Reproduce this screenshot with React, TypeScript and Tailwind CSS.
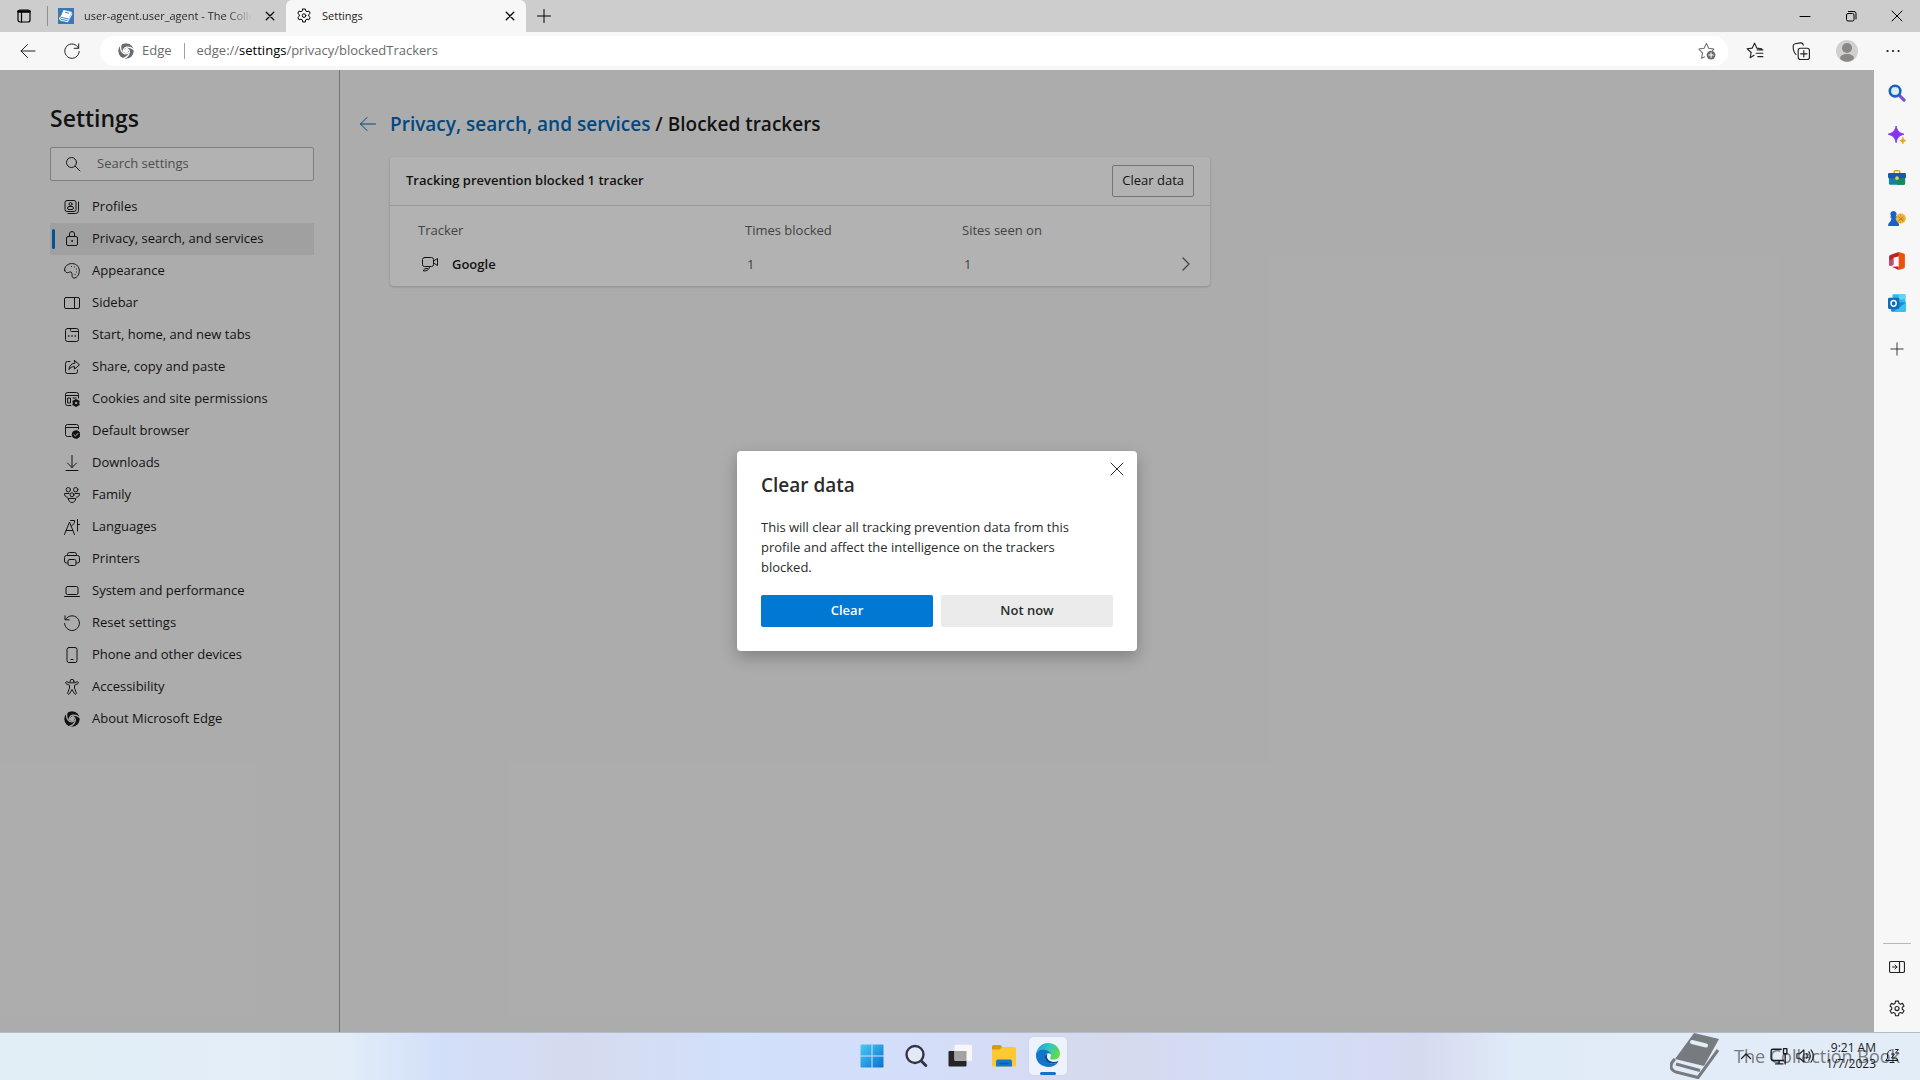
import type { ReactNode } from 'react';
import { clsx } from 'clsx';

type IconProps = {
  children: ReactNode;
  className?: string;
};

function Icon({ children, className = 'size-4' }: IconProps) {
  return (
    <svg
      viewBox="0 0 16 16"
      fill="none"
      stroke="currentColor"
      strokeLinecap="round"
      strokeLinejoin="round"
      className={clsx('shrink-0', className)}
      aria-hidden="true"
    >
      {children}
    </svg>
  );
}

const GearShape = () => (
  <>
    <path d="M6.7 1h2.6l.4 1.900 1.300.8 1.900-.7 1.300 2.300-1.500 1.300v1.600l1.500 1.300-1.300 2.300-1.900-.7-1.300.8-.4 2.100H6.700l-.4-2.100-1.300-.8-1.900.7-1.300-2.300 1.500-1.300V6.600L1.800 5.300 3.100 3l1.900.7 1.300-.8z" />
    <circle cx="8" cy="7.600" r="1.800" />
  </>
);

// Single-colour Edge mark: a disc cut by three curved blades
const SwirlShape = ({ id }: { id: string }) => (
  <>
    <mask id={id}>
      <circle cx="8" cy="8" r="8" fill="#fff" stroke="none" />
      <g stroke="#000" strokeWidth="1.300" fill="none">
        <path d="M5.400 9.200C4.800 6.800 6.200 4.700 8.600 4.200 11.500 3.700 14 4.800 16.500 7.200" />
        <path d="M5.400 9.200C4.800 6.800 6.200 4.700 8.600 4.200 11.500 3.700 14 4.800 16.500 7.200" transform="rotate(120 8 8)" />
        <path d="M5.400 9.200C4.800 6.800 6.200 4.700 8.600 4.200 11.500 3.700 14 4.800 16.500 7.200" transform="rotate(240 8 8)" />
      </g>
      <circle cx="8" cy="8" r="2.200" fill="#000" stroke="none" />
    </mask>
    <circle cx="8" cy="8" r="7.800" fill="currentColor" stroke="none" mask={`url(#${id})`} />
  </>
);

const navItems: { label: string; icon: ReactNode; active?: boolean }[] = [
  {
    label: 'Profiles',
    icon: (
      <>
        <rect x="1" y="1.500" width="11" height="11" rx="2" />
        <circle cx="6.500" cy="5" r="1.500" />
        <rect x="3.500" y="7.500" width="6" height="3" rx="1.500" />
        <path d="M14.500 3v8.500a3 3 0 0 1-3 3H4" />
      </>
    ),
  },
  {
    label: 'Privacy, search, and services',
    active: true,
    icon: (
      <>
        <rect x="2.500" y="5.500" width="11" height="9" rx="1.500" />
        <path d="M5.500 5.500V3a2.500 2.500 0 0 1 5 0v2.500" />
        <circle cx="8" cy="10" r="0.500" />
      </>
    ),
  },
  {
    label: 'Appearance',
    icon: (
      <>
        <path d="M.6 7C.4 4.500 2 2.500 4.500 1.300 8-.4 12.800.8 14.600 4.500c1.500 3.200.6 7.600-2.300 9.800-1.600 1.200-3.800 1.100-4.200-1-.2-1 .1-2.300-.2-3.200-.5-1.500-2-1.300-3.100-.7C3 10.200.8 9.300.6 7z" />
        <path d="M7.500 3.500h.1M10.500 4h.1M12.500 6h.1M12.500 9h.1M11 11.500h.1" />
      </>
    ),
  },
  {
    label: 'Sidebar',
    icon: (
      <>
        <rect x="0.500" y="2.500" width="15" height="11" rx="1.500" />
        <path d="M10.500 2.500v11" />
      </>
    ),
  },
  {
    label: 'Start, home, and new tabs',
    icon: (
      <>
        <rect x="1.500" y="1.500" width="13" height="13" rx="2" />
        <path d="M6.500 1.500v2a1 1 0 0 0 1 1h7" />
        <path d="M4.500 9h.4M7.800 9h.4M11.100 9h.4" strokeWidth="1.400" />
      </>
    ),
  },
  {
    label: 'Share, copy and paste',
    icon: (
      <>
        <path d="M6 2.500H3.500a2 2 0 0 0-2 2v8a2 2 0 0 0 2 2h8a2 2 0 0 0 2-2V11" />
        <path d="M10.500 1.500l5 4.300-5 4.300V7.600c-2.600 0-4.300.9-5.500 3 .1-3.500 2-6 5.500-6.400z" />
      </>
    ),
  },
  {
    label: 'Cookies and site permissions',
    icon: (
      <>
        <path d="M7 14.500H3.500a2 2 0 0 1-2-2v-9a2 2 0 0 1 2-2h9a2 2 0 0 1 2 2v3.500M1.500 4.500h13" />
        <path d="M4 7h2.500v5H4zM9 7h3" />
        <circle cx="12" cy="12" r="2.300" strokeWidth="2.200" />
        <path d="M12 8.400v7.200M8.900 10.200l6.200 3.600M8.900 13.800l6.200-3.600" strokeWidth="1.200" />
        <circle cx="12" cy="12" r="0.700" fill="#f7f7f7" stroke="#f7f7f7" />
      </>
    ),
  },
  {
    label: 'Default browser',
    icon: (
      <>
        <path d="M7 13.500H3.500a2 2 0 0 1-2-2v-8a2 2 0 0 1 2-2h9a2 2 0 0 1 2 2V6M1.500 4.500h13" />
        <circle cx="12" cy="11.500" r="3.800" fill="currentColor" />
        <path d="M10 11.700l1.500 1.400 2.600-2.800" stroke="#f7f7f7" />
      </>
    ),
  },
  {
    label: 'Downloads',
    icon: <path d="M8 .5v12M3.500 8L8 12.500 12.500 8M2 15.500h12" />,
  },
  {
    label: 'Family',
    icon: (
      <>
        <circle cx="4.300" cy="2.700" r="2.200" />
        <circle cx="11.700" cy="2.700" r="2.200" />
        <circle cx="8" cy="7.800" r="2" />
        <path d="M4.300 11.500h7.400c0 2.300-1.600 4-3.700 4s-3.700-1.700-3.700-4zM5 6.500H.5C.3 8.300 1.300 10 3.500 10.300M11 6.500h4.500c.2 1.800-.8 3.500-3 3.800" />
      </>
    ),
  },
  {
    label: 'Languages',
    icon: (
      <path d="M.5 15.500L5.500 3l5 12.500M2.200 11.500h6.500M6.500 1.500h4.200C10.700 4 9.500 5.800 7.500 7M13.500.5V12M13.500 5.500h2" />
    ),
  },
  {
    label: 'Printers',
    icon: (
      <>
        <path d="M3.500 12H2.500a2 2 0 0 1-2-2V6.500a2 2 0 0 1 2-2h11a2 2 0 0 1 2 2V10a2 2 0 0 1-2 2h-1M3.500 4.500v-1a2 2 0 0 1 2-2h5a2 2 0 0 1 2 2v1" />
        <rect x="4" y="8.500" width="8" height="6" rx="1.500" />
      </>
    ),
  },
  {
    label: 'System and performance',
    icon: (
      <>
        <rect x="2" y="3.500" width="12" height="8" rx="1.500" />
        <path d="M.5 13.500h15" />
      </>
    ),
  },
  {
    label: 'Reset settings',
    icon: <path d="M1 .8v4h4.200M1.500 4.600A7.400 7.400 0 1 1 .6 8.500" />,
  },
  {
    label: 'Phone and other devices',
    icon: (
      <>
        <rect x="3" y=".5" width="10" height="15" rx="2" />
        <path d="M7 12.500h2" />
      </>
    ),
  },
  {
    label: 'Accessibility',
    icon: (
      <>
        <circle cx="8" cy="2.200" r="1.900" />
        <path d="M6 4L3 2.800c-1.200-.4-2 1.300-.8 1.900L5.500 6.300v2.800l-1.800 4.700c-.4 1.400 1.400 2 1.900.8L8 10.500l2.400 4.100c.5 1.200 2.300.6 1.900-.8l-1.800-4.700V6.300l3.300-1.600c1.200-.6.4-2.300-.8-1.900L10 4" />
      </>
    ),
  },
  { label: 'About Microsoft Edge', icon: <SwirlShape id="swirl-about" /> },
];

function TabBar() {
  return (
    <div className="flex h-8 shrink-0 items-stretch bg-[#cdcdcd]">
      <button className="flex w-[47px] items-center justify-center" aria-label="Tab actions menu">
        <Icon className="size-4">
          <rect x="2" y="2" width="12" height="12" rx="2" strokeWidth="1.200" />
          <path d="M2.500 3.500h11" strokeWidth="2.600" />
          <path d="M5.500 4v10" strokeWidth="1.200" />
        </Icon>
      </button>
      <div className="my-1.5 w-px bg-[#8f8f8f]" />
      <div className="flex w-[238px] items-center gap-2.5 pl-2.5 pr-2">
        <svg viewBox="0 0 16 16" className="size-4 shrink-0" aria-hidden="true">
          <rect width="16" height="16" fill="#3a78b8" />
          <path d="M5.500 2L14 4 10.500 10.500 2.500 8.800z" fill="#fff" />
          <path d="M2.500 9c-1.200 1.200-.8 2.800.5 3.300l6.500 1.400L14 5.500M3 10.300l6.700 1.500" fill="none" stroke="#fff" strokeWidth="1.100" />
          <path d="M7 4.300l4 .9" stroke="#3a78b8" />
        </svg>
        <span className="min-w-0 flex-1 overflow-hidden whitespace-nowrap bg-linear-to-r from-[#222] from-85% to-transparent bg-clip-text text-[11px] text-transparent">
          user-agent.user_agent - The Collection Book
        </span>
        <button className="flex size-4 items-center justify-center" aria-label="Close tab">
          <Icon className="size-3">
            <path d="M3 3l10 10M13 3L3 13" strokeWidth="1.800" />
          </Icon>
        </button>
      </div>
      <div className="flex w-60 items-center gap-2.5 rounded-t-md bg-[#f7f7f7] pl-2.5 pr-2">
        <Icon>
          <GearShape />
        </Icon>
        <span className="flex-1 text-[11px] text-[#222]">Settings</span>
        <button className="flex size-4 items-center justify-center" aria-label="Close tab">
          <Icon className="size-3">
            <path d="M3 3l10 10M13 3L3 13" strokeWidth="1.800" />
          </Icon>
        </button>
      </div>
      <button className="flex w-9 items-center justify-center" aria-label="New tab">
        <Icon className="size-4">
          <path d="M8 1.500v13M1.500 8h13" />
        </Icon>
      </button>
      <div className="ml-auto flex">
        <button className="flex w-[46px] items-center justify-center" aria-label="Minimize">
          <Icon className="size-4">
            <path d="M3 8.500h10" />
          </Icon>
        </button>
        <button className="flex w-[46px] items-center justify-center" aria-label="Restore">
          <Icon className="size-4">
            <rect x="3.500" y="5.500" width="7.500" height="7.500" rx="1.500" />
            <path d="M5.500 3.500H11a2 2 0 0 1 2 2V11" />
          </Icon>
        </button>
        <button className="flex w-[46px] items-center justify-center" aria-label="Close">
          <Icon className="size-4">
            <path d="M3 3l10 10M13 3L3 13" />
          </Icon>
        </button>
      </div>
    </div>
  );
}

function Toolbar() {
  return (
    <div className="flex h-[38px] shrink-0 items-center bg-[#f7f7f7] pl-2 text-[#222]">
      <button className="flex w-10 justify-center" aria-label="Back">
        <Icon className="size-4">
          <path d="M15 8H1M7.500 1.500L1 8l6.500 6.500" />
        </Icon>
      </button>
      <button className="flex w-12 justify-center" aria-label="Refresh">
        <Icon className="size-4">
          <path d="M14.500 5A7.200 7.200 0 1 0 15.200 8.500M14.700.8v4.500h-4.500" />
        </Icon>
      </button>
      <div className="ml-1 flex h-[30px] flex-1 items-center rounded-full bg-white pl-[18px] pr-3 text-[13px] text-[#6b6b6b]">
        <Icon className="size-4">
          <SwirlShape id="swirl-address" />
        </Icon>
        <span className="pl-2">Edge</span>
        <div className="mx-3 h-4 w-px bg-[#a0a0a0]" />
        <span className="flex-1">
          edge://<span className="text-black">settings</span>/privacy/blockedTrackers
        </span>
        <button aria-label="Add this page to favorites">
          <Icon className="size-[18px]">
            <path d="M6 13.200L3.200 14.500 4 9.700.8 6.300l4.600-.7L7.500 1.200l2 4.400 4.600.7-1.200 1.300" strokeWidth="0.900" />
            <circle cx="11.600" cy="11.600" r="3.900" fill="currentColor" stroke="none" />
            <path d="M11.600 9.600v4M9.600 11.600h4" stroke="#fff" />
          </Icon>
        </button>
      </div>
      <div className="flex items-center px-1">
        <button className="flex w-[46px] justify-center" aria-label="Favorites">
          <Icon className="size-[18px]">
            <path d="M7.200 11.800L3.700 14l.9-4.700L1 6l4.600-.6L7.600 1l2 4.400 4.400.6M10 7h5M9 10h6M10.500 13H15" />
          </Icon>
        </button>
        <button className="flex w-[46px] justify-center" aria-label="Collections">
          <Icon className="size-[18px]">
            <rect x="5.500" y="5.500" width="10" height="10" rx="2" />
            <path d="M10.500 7.700v5.600M7.700 10.500h5.600" />
            <path d="M3.500 11C1.800 9.500 1 6 1 3.500 1 2.300 1.800 1.800 2.800 1.600L7.500.8c1.500-.2 2.300.6 2.500 2" />
          </Icon>
        </button>
        <button className="flex w-[46px] justify-center" aria-label="Profile">
          <svg viewBox="0 0 22 22" className="size-[22px]" aria-hidden="true">
            <circle cx="11" cy="11" r="11" fill="#d2d0ce" />
            <circle cx="11" cy="8" r="5" fill="#8a8886" />
            <path d="M4 18.500c0-3 3-4.500 7-4.500s7 1.500 7 4.500c-2 2.300-4.500 3.300-7 3.300s-5-1-7-3.300z" fill="#8a8886" />
          </svg>
        </button>
        <button className="flex w-[46px] justify-center" aria-label="Settings and more">
          <Icon className="size-4">
            <path d="M2.500 8h.1M8 8h.1M13.500 8h.1" strokeWidth="2.200" />
          </Icon>
        </button>
      </div>
    </div>
  );
}

function SettingsNav() {
  return (
    <nav className="w-[340px] shrink-0 border-r border-[#a8a8a8] pl-[50px] pr-[25px] pt-8 text-[#1b1b1b]">
      <h1 className="text-[23px] font-semibold leading-8">Settings</h1>
      <div className="mt-[13px] flex h-[34px] items-center rounded-xs border border-[#b5b5b5] bg-white pl-3.5">
        <Icon className="size-4">
          <circle cx="6.500" cy="6.500" r="5" />
          <path d="M10.200 10.200l4.800 4.800" />
        </Icon>
        <input
          type="text"
          aria-label="Search settings"
          placeholder="Search settings"
          className="w-full bg-transparent pl-4 text-[13px] outline-none placeholder:text-[#717171]"
        />
      </div>
      <ul className="mt-2.5">
        {navItems.map(({ label, icon, active }) => (
          <li key={label}>
            <a
              href="#"
              className={clsx(
                'flex h-8 items-center gap-3 text-[13px]',
                active ? 'bg-[#e5e5e5] pl-0.5' : 'pl-3.5',
              )}
            >
              {active && <span className="-mr-[3px] h-5 w-[3px] rounded-full bg-[#0078d4]" />}
              <Icon>{icon}</Icon>
              {label}
            </a>
          </li>
        ))}
      </ul>
    </nav>
  );
}

function BlockedTrackers() {
  return (
    <main className="min-w-0 flex-1 pl-5 pr-8 pt-10 text-[#1b1b1b]">
      <div className="flex items-center gap-3.5">
        <button className="text-[#0067b8]" aria-label="Go back">
          <Icon className="size-4">
            <path d="M15.500 8H.5M7 1.500L.5 8 7 14.500" />
          </Icon>
        </button>
        <h2 className="text-[19px] font-semibold leading-7">
          <a href="#" className="text-[#0067b8]">
            Privacy, search, and services
          </a>{' '}
          / Blocked trackers
        </h2>
      </div>
      <section className="ml-[30px] mt-[19px] max-w-[820px] rounded-sm bg-white shadow-[0_1px_3px_rgba(0,0,0,0.2)]">
        <div className="flex h-[49px] items-center justify-between border-b border-[#dcdcdc] px-4">
          <h3 className="text-[13px] font-semibold">Tracking prevention blocked 1 tracker</h3>
          <button className="h-8 rounded-xs border border-[#a8a8a8] px-[9px] text-[13px]">
            Clear data
          </button>
        </div>
        <table className="w-full table-fixed text-left text-[13px] leading-5 text-[#616161]">
          <colgroup>
            <col className="w-[355px]" />
            <col className="w-[217px]" />
            <col />
            <col className="w-12" />
          </colgroup>
          <thead>
            <tr className="h-12">
              <th className="pl-7 font-normal">Tracker</th>
              <th className="font-normal">Times blocked</th>
              <th className="font-normal">Sites seen on</th>
              <th />
            </tr>
          </thead>
          <tbody>
            <tr className="h-8 align-top">
              <td className="pl-8">
                <div className="flex items-center gap-3.5 font-semibold text-[#1b1b1b]">
                  <Icon>
                    <rect x="0.500" y="1.500" width="11" height="9" rx="2" />
                    <path d="M11.500 5l4-2.500v7l-4-2.500M7.500 10.500c0 3-2 4.500-6 4.500 0-2 1.500-2.500 4-2.500" />
                  </Icon>
                  Google
                </div>
              </td>
              <td className="pl-0.5">1</td>
              <td className="pl-0.5">1</td>
              <td>
                <button className="flex h-5 w-full items-center justify-center" aria-label="Show details">
                  <Icon className="size-4">
                    <path d="M5 2l6 6-6 6" strokeWidth="1.300" />
                  </Icon>
                </button>
              </td>
            </tr>
          </tbody>
        </table>
      </section>
    </main>
  );
}

function ClearDataDialog() {
  return (
    <div className="absolute inset-0 flex items-center justify-center bg-black/30">
      <div
        role="dialog"
        aria-labelledby="clear-data-title"
        className="relative w-[400px] rounded-sm bg-white p-6 pt-5 text-[#2b2b2b] shadow-[0_6px_16px_rgba(0,0,0,0.25)]"
      >
        <button className="absolute right-3 top-2.5" aria-label="Close">
          <Icon className="size-4">
            <path d="M2 2l12 12M14 2L2 14" />
          </Icon>
        </button>
        <h2 id="clear-data-title" className="text-[19px] font-semibold leading-7">
          Clear data
        </h2>
        <p className="mt-[18px] pr-3 text-[13px] leading-5">
          This will clear all tracking prevention data from this profile and affect the intelligence
          on the trackers blocked.
        </p>
        <div className="mt-[18px] flex gap-2 text-[13px] font-semibold">
          <button className="h-8 flex-1 rounded-xs bg-[#0078d4] text-white">Clear</button>
          <button className="h-8 flex-1 rounded-xs bg-[#ebebeb]">Not now</button>
        </div>
      </div>
    </div>
  );
}

const sidebarApps: { label: string; icon: ReactNode }[] = [
  {
    label: 'Search',
    icon: (
      <>
        <path d="M10.500 10.500l3.800 3.800" stroke="#7b4fd0" strokeWidth="2.800" />
        <circle cx="6.300" cy="6.300" r="4.700" stroke="#1c5fc4" strokeWidth="2.300" fill="#d7effc" />
      </>
    ),
  },
  {
    label: 'Discover',
    icon: (
      <>
        <path d="M7.200 0c.9 4.300 2.300 5.900 7 7.300-4.700 1.400-6.100 3-7 7.500C6.300 10.300 4.700 8.700.2 7.300 4.700 5.900 6.300 4.300 7.200 0z" fill="#8435e8" stroke="#8435e8" strokeWidth="0.800" />
        <path d="M13.200 10c.4 1.900 1 2.500 2.800 3-1.800.5-2.400 1.100-2.800 3-.4-1.900-1-2.500-2.800-3 1.800-.5 2.400-1.100 2.800-3z" fill="#eaa61a" stroke="#eaa61a" strokeWidth="0.600" />
      </>
    ),
  },
  {
    label: 'Tools',
    icon: (
      <>
        <path d="M5.500 5V3.500a1 1 0 0 1 1-1h3a1 1 0 0 1 1 1V5" stroke="#d9a928" strokeWidth="1.400" />
        <rect x="0.800" y="8" width="14.400" height="6.800" rx="1" fill="#1482a0" stroke="none" />
        <path d="M8 8h7.200v5.800a1 1 0 0 1-1 1H8z" fill="#128b56" stroke="none" />
        <rect x="0" y="4.500" width="16" height="4.500" rx="1" fill="#1a56b8" stroke="none" />
        <circle cx="8" cy="9" r="1.600" fill="#f2c94a" stroke="none" />
      </>
    ),
  },
  {
    label: 'Games',
    icon: (
      <>
        <circle cx="11.300" cy="7.500" r="4.600" fill="#f0b93c" stroke="none" />
        <path d="M9.500 6l3.800 3.600M13.300 6L9.500 9.600M11.300 4.500v.1M14 7.800v.1M11.300 10.800v.1" stroke="#b97a16" strokeWidth="0.900" />
        <path d="M4.800.8a2.800 2.800 0 0 1 2 4.700h.7v1.400h-.7c0 2 .8 3 2.200 4.300.8.9.9 2 .6 3.100H.2c-.3-1.200 0-2.400 1-3.200 1.300-1.100 1.800-2.200 1.800-4.200h-.8V5.500h.7A2.800 2.800 0 0 1 4.800.8z" fill="#1b60c6" stroke="none" />
      </>
    ),
  },
  {
    label: 'Microsoft 365',
    icon: (
      <>
        <path d="M9.500 0L2.500 2.500C1.500 2.900 1 3.500 1 4.500v7.300l1.500.7 2.300-1.200V5.200L10 3.700z" fill="#b5271c" stroke="none" />
        <path d="M1 8l3.800-2.500v5.800l-2.300 1.200L1 11.800z" fill="#c9467a" stroke="none" />
        <path d="M3.500 13l6-.2V16z" fill="#c8102e" stroke="none" />
        <path d="M9.500 0L14 1.400c.7.200 1 .7 1 1.300v10.600c0 .6-.3 1-1 1.300L9.500 16z" fill="#e8530f" stroke="none" />
      </>
    ),
  },
  {
    label: 'Outlook',
    icon: (
      <>
        <rect x="4" y="0.300" width="11.500" height="9" rx="0.800" fill="#32b7ec" stroke="none" />
        <path d="M9.500.3h6v4.500h-6z" fill="#62d2f8" stroke="none" />
        <path d="M2.500 7L16 7.500v7.200a1 1 0 0 1-1 1H3.500a1 1 0 0 1-1-1z" fill="#158fd8" stroke="none" />
        <path d="M16 7.500l-11 8.200H15a1 1 0 0 0 1-1z" fill="#3cc0ee" stroke="none" />
        <rect x="0" y="3.300" width="10" height="10" rx="1" fill="#0f6cbd" stroke="none" />
        <ellipse cx="5" cy="8.300" rx="2.300" ry="2.600" stroke="#fff" strokeWidth="1.300" />
      </>
    ),
  },
];

function EdgeSidebar() {
  return (
    <aside className="flex w-[46px] shrink-0 flex-col items-center bg-[#f7f7f7] pb-0.5 pt-0.5 text-[#222]">
      {sidebarApps.map(({ label, icon }) => (
        <button key={label} className="flex h-[42px] w-full items-center justify-center" aria-label={label}>
          <Icon className="size-[18px]">{icon}</Icon>
        </button>
      ))}
      <button className="mt-1 flex h-[42px] w-full items-center justify-center" aria-label="Customize">
        <Icon className="size-3.5">
          <path d="M8 1v14M1 8h14" />
        </Icon>
      </button>
      <div className="mb-0.5 mt-auto h-px w-7 bg-[#b8b8b8]" />
      <button className="flex h-[42px] w-full items-center justify-center" aria-label="Hide sidebar">
        <Icon className="size-4">
          <rect x="0.500" y="2.500" width="15" height="11" rx="1.500" strokeWidth="1.200" />
          <path d="M10.500 2.500v11" strokeWidth="1.200" />
          <path d="M3.500 8H8M6 6l2 2-2 2" />
        </Icon>
      </button>
      <button className="flex h-[42px] w-full items-center justify-center" aria-label="Settings">
        <Icon className="size-[18px]">
          <GearShape />
        </Icon>
      </button>
    </aside>
  );
}

function Taskbar() {
  return (
    <footer className="relative flex h-12 shrink-0 items-center justify-center bg-[linear-gradient(90deg,#e2eef6_0%,#e2edf8_18%,#d2dff9_23%,#d5dbee_30%,#d2e0fb_38%,#d4defa_48%,#d6d9ec_58%,#d2def9_66%,#d6daef_74%,#e0ebf8_79%,#e3edf8_100%)] text-[#1b1b1b] shadow-[inset_0_1px_0_#b4bcc6]">
      <div className="flex items-center">
        <button className="flex size-11 items-center justify-center" aria-label="Start">
          <svg viewBox="0 0 24 24" className="size-6">
            <defs>
              <linearGradient id="start" x1="0" y1="0" x2="1" y2="1">
                <stop offset="0" stopColor="#4cc8f5" />
                <stop offset="1" stopColor="#0673cf" />
              </linearGradient>
            </defs>
            <path d="M.5 1.500a1 1 0 0 1 1-1h10v11H.5zM12.500.5h10a1 1 0 0 1 1 1v10h-11zM.5 12.500h11v11h-10a1 1 0 0 1-1-1zM12.500 12.500h11v10a1 1 0 0 1-1 1h-10z" fill="url(#start)" />
          </svg>
        </button>
        <button className="flex size-11 items-center justify-center" aria-label="Search">
          <svg viewBox="0 0 24 24" fill="none" className="size-6">
            <circle cx="11" cy="10.500" r="8.500" fill="#eef0f6" fillOpacity="0.600" stroke="#333640" strokeWidth="2.400" />
            <path d="M17.300 17l4.500 4.500" stroke="#333640" strokeWidth="3" strokeLinecap="round" />
          </svg>
        </button>
        <button className="flex size-11 items-center justify-center" aria-label="Task view">
          <svg viewBox="0 0 24 24" className="size-6">
            <rect x="0.500" y="7" width="18" height="15.500" rx="1" fill="#252525" />
            <rect x="6.500" y="0.800" width="17.500" height="16" rx="1" fill="#f7f7f7" />
            <path d="M6.500 7h12v9.800h-11a1 1 0 0 1-1-1z" fill="#a3a3a3" />
          </svg>
        </button>
        <button className="flex size-11 items-center justify-center" aria-label="File Explorer">
          <svg viewBox="0 0 24 24" className="size-6">
            <path d="M0 2.500a1.500 1.500 0 0 1 1.500-1.500h6.800l2.500 2.500L9 6H0z" fill="#d9980f" />
            <path d="M0 5.500h7.500l2.500-2.500h12.500a1.500 1.500 0 0 1 1.500 1.500v16.500a1.500 1.500 0 0 1-1.500 1.500h-21A1.500 1.500 0 0 1 0 21z" fill="#fcc934" />
            <path d="M4 22.500v-5a2 2 0 0 1 2-2h12a2 2 0 0 1 2 2v5z" fill="#1576cc" />
            <path d="M7.500 19.500h9" stroke="#0b5cab" strokeWidth="1.500" />
          </svg>
        </button>
        <button className="flex size-11 items-center justify-center" aria-label="Microsoft Edge">
          <span className="flex size-[38px] flex-col items-center justify-between rounded-sm bg-[#eef2fc] pt-1.5 shadow-[0_0_1px_rgba(0,0,0,0.25)]">
            <svg viewBox="0 0 24 24" className="size-6">
              <defs>
                <linearGradient id="edge-top" x1="0" y1="0" x2="1" y2="0.500">
                  <stop offset="0" stopColor="#2596dc" />
                  <stop offset="0.500" stopColor="#30c3c8" />
                  <stop offset="1" stopColor="#5fdc4c" />
                </linearGradient>
              </defs>
              <path d="M0 12C.4 5.200 5.400 0 12 0s12 4.700 12 10.500c0 4-3.100 6.200-6.300 6.200-3 0-4.300-1-3.400-2.200 1.600-2 .5-4.600-2.300-5.300C8 8.200 2.500 9 0 12z" fill="url(#edge-top)" />
              <path d="M0 12c.8-4 5-6 9.500-5 2.600.6 4.700 1.900 5.400 4C13 9.500 10.400 10 9.400 12.300c-1.400 3.600 2.100 8.600 8 8.500 2-.1 3.700-1 4.700-1.800C20 22.300 16.400 24 12.500 24 5.400 24-.4 19 0 12z" fill="#1374c8" />
              <path d="M9.200 12.300c-1.400 4.200 2.300 8.800 8.200 8.500 2-.1 3.700-1 4.700-1.800.5-.4.3-1-.3-.7-3.500 1.500-8.800.8-10.500-3-.6-1.500-.4-3 .2-4-1 .1-1.900.3-2.300 1z" fill="#0c4a94" />
            </svg>
            <span className="h-[3px] w-4 rounded-full bg-[#1373cb]" />
          </span>
        </button>
      </div>
      {/* watermark under the tray */}
      <div className="absolute inset-y-0 right-5 flex items-center gap-3.5 text-[#777b80]">
        <svg viewBox="0 0 50 46" className="h-[46px] w-[50px]" aria-hidden="true">
          <path d="M24 0l25 6-15 27L5 26z" fill="currentColor" />
          <path d="M22 9l14 3.500" stroke="#e2edf8" strokeWidth="4" strokeLinecap="round" />
          <path d="M5 26c-6 5-5 11 1 13l22 5.500L48 17M6 31l24 6.500" fill="none" stroke="currentColor" strokeWidth="3" strokeLinejoin="round" />
        </svg>
        <span className="whitespace-nowrap text-lg">The Collection Book</span>
      </div>
      <div className="absolute inset-y-0 right-0 flex items-center pr-5">
        <button className="mr-4" aria-label="Show hidden icons">
          <Icon className="size-4">
            <path d="M3.500 10.500L8 6l4.500 4.500" strokeWidth="1.300" />
          </Icon>
        </button>
        <Icon className="mr-2 size-[18px]">
          <path d="M10 2H2.500A1.500 1.500 0 0 0 1 3.500v7A1.500 1.500 0 0 0 2.500 12H12M8 12v3M5 15h6.500M12 1.500h3V6h-3zM13.500 6v9" strokeWidth="1.200" />
        </Icon>
        <Icon className="mr-3 size-[18px]">
          <path d="M.8 6v4h2.500L7 13.500v-11L3.300 6zM9.300 6c.9 1.200.9 2.800 0 4M11.300 4.200c1.900 2.200 1.900 5.400 0 7.600M13.300 2.500c2.800 3.200 2.800 7.800 0 11" />
        </Icon>
        <div className="text-right text-xs">
          <div>9:21 AM</div>
          <div>1/7/2023</div>
        </div>
        <Icon className="ml-2 size-4">
          <path d="M2 12.500h12L12.500 10M7 2C4.500 2.500 3.500 4.500 3.500 6.500V10L2 12.500M6 14.500h4M7.500 6h3l-3 4h3M11.500 1.500h3l-3 3.500h3" />
        </Icon>
      </div>
    </footer>
  );
}

export default function App() {
  return (
    <div className="flex h-screen flex-col overflow-hidden font-['Open_Sans','Noto_Sans',sans-serif]">
      <TabBar />
      <Toolbar />
      <div className="flex min-h-0 flex-1">
        <div className="relative flex min-w-0 flex-1 bg-[#f7f7f7]">
          <SettingsNav />
          <BlockedTrackers />
          <ClearDataDialog />
        </div>
        <EdgeSidebar />
      </div>
      <Taskbar />
    </div>
  );
}
